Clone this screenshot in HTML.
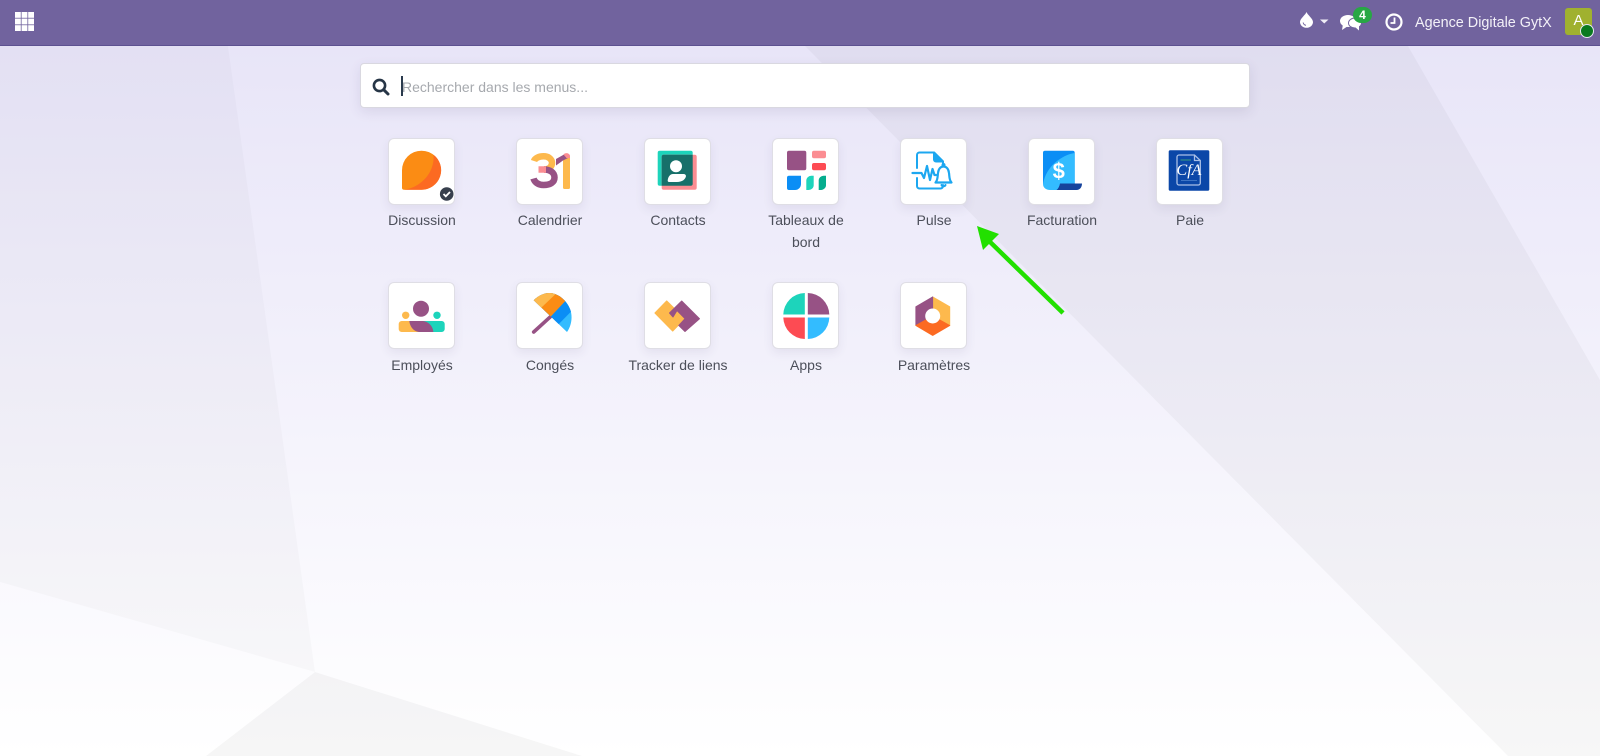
<!DOCTYPE html>
<html lang="fr">
<head>
<meta charset="utf-8">
<title>Odoo</title>
<style>
*{box-sizing:border-box}
html,body{margin:0;padding:0;width:1600px;height:756px;overflow:hidden;font-family:"Liberation Sans",sans-serif}
body{position:relative;background:linear-gradient(180deg,#e8e5f8 45px,#fff 756px)}
.bg{position:absolute;left:0;top:0}
.nav{position:absolute;left:0;top:0;width:1600px;height:46px;background:#71639e;border-bottom:1px solid #5d5190;color:#fff}
.abs{position:absolute}
.search{position:absolute;left:360px;top:63px;width:890px;height:45px;background:#fff;border:1px solid #d9d8e0;border-radius:4px;box-shadow:0 4px 12px rgba(60,50,100,.1)}
.ph{position:absolute;left:41px;top:13px;font-size:14px;line-height:20px;color:#a6a9ae;white-space:nowrap}
.caret{position:absolute;left:40px;top:12px;width:1.5px;height:20px;background:#2a3a4d}
.tile{position:absolute;width:67px;height:67px;background:#fff;border:1px solid #dfdee5;border-radius:6px;box-shadow:0 4px 10px rgba(60,50,100,.08)}
.tile svg{position:absolute;left:0;top:0;width:66px;height:66px;overflow:visible}
.r1 svg{top:-1px}
.lb{position:absolute;width:104px;text-align:center;font-size:14px;line-height:21.6px;color:#4c4f5a}
</style>
</head>
<body>
<svg class="bg" width="1600" height="756" viewBox="0 0 1600 756">
<polygon points="0,46 228,46 315,672 0,582" fill="#000" fill-opacity=".02"/>
<polygon points="805,46 1408,46 1600,380 1600,756 1508,756" fill="#000" fill-opacity=".032"/>
<polygon points="315,672 206,756 582,756" fill="#000" fill-opacity=".035"/>
</svg>

<div class="nav">
<svg class="abs" style="left:15px;top:12px" width="19" height="19" viewBox="0 0 19 19" fill="#fff">
<rect width="5.800" height="5.800"/><rect x="6.600" width="5.800" height="5.800"/><rect x="13.200" width="5.800" height="5.800"/>
<rect y="6.600" width="5.800" height="5.800"/><rect x="6.600" y="6.600" width="5.800" height="5.800"/><rect x="13.200" y="6.600" width="5.800" height="5.800"/>
<rect y="13.200" width="5.800" height="5.800"/><rect x="6.600" y="13.200" width="5.800" height="5.800"/><rect x="13.200" y="13.200" width="5.800" height="5.800"/>
</svg>
<svg class="abs" style="left:1300px;top:12px" width="30" height="16" viewBox="0 0 30 16">
<path d="M6.500 0C7.500 3 13 6.500 13 10A6.500 5.800 0 0 1 0 10C0 6.500 5.500 3 6.500 0Z" fill="#fff"/>
<path d="M3.200 10.500A3 3 0 0 0 6 13.200" stroke="#71639e" stroke-width="1" fill="none"/>
<path d="M20 7.500H28.500L24.250 11.500Z" fill="#f0eef6"/>
</svg>
<svg class="abs" style="left:1340px;top:12px" width="24" height="20" viewBox="0 0 24 20" fill="#fff">
<ellipse cx="8" cy="9" rx="8" ry="6"/><path d="M3 12L2 18L8 14Z"/>
<ellipse cx="15" cy="11" rx="6.500" ry="5" stroke="#71639e" stroke-width="1"/><path d="M15 15L19 18.500L19 14Z"/>
</svg>
<div class="abs" style="left:1353px;top:7px;width:19px;height:16px;border-radius:8px;background:#28a745;color:#fff;font-size:12px;font-weight:bold;line-height:16px;text-align:center">4</div>
<svg class="abs" style="left:1385px;top:13px" width="18" height="18" viewBox="0 0 18 18">
<circle cx="9" cy="9" r="7.500" fill="none" stroke="#fff" stroke-width="2.200"/>
<path d="M9.500 4.500V10H5.500" fill="none" stroke="#fff" stroke-width="1.800"/>
</svg>
<div class="abs" style="left:1415px;top:13px;font-size:14.400px;line-height:20px;white-space:nowrap;color:#f3f1f8">Agence Digitale GytX</div>
<div class="abs" style="left:1565px;top:8px;width:27px;height:27px;background:#a0b12f;border-radius:3px;color:#fff;font-size:15px;line-height:26px;text-align:center">A</div>
<div class="abs" style="left:1580px;top:24px;width:14px;height:14px;border-radius:50%;background:#0a7a1f;border:1.500px solid #e8e6f2"></div>
</div>

<div class="search">
<svg class="abs" style="left:11px;top:14px" width="18" height="18" viewBox="0 0 18 18">
<circle cx="7.500" cy="7.500" r="5.600" fill="none" stroke="#263546" stroke-width="2.600"/>
<path d="M11.800 11.800L16 16" stroke="#263546" stroke-width="3" stroke-linecap="round"/>
</svg>
<div class="caret"></div>
<div class="ph">Rechercher dans les menus...</div>
</div>

<!-- Discussion -->
<div class="tile r1" style="left:388px;top:138px"><svg viewBox="0 0 66 66">
<path d="M13 32.200A19.500 19.500 0 1 1 32.500 51.700H15A2 2 0 0 1 13 49.700Z" fill="#fb8c14"/>
<path d="M44.500 16.700A19.500 19.500 0 0 1 32.500 51.700H15C30 50 46 36 44.500 16.700Z" fill="#fc6a22"/>
<circle cx="57.700" cy="56" r="7.800" fill="#fff"/><circle cx="57.700" cy="56" r="6.800" fill="#373f4d"/>
<path d="M54.500 56L56.800 58.300L61 54" fill="none" stroke="#fff" stroke-width="1.800"/>
</svg></div>
<div class="lb" style="left:370px;top:210px">Discussion</div>

<!-- Calendrier -->
<div class="tile r1" style="left:516px;top:138px"><svg viewBox="0 0 66 66">
<path d="M17 23C18 20 22 18.300 26.500 18.300C31.500 18.300 35 21 35 25C35 29 31.500 31.500 27 31.500" fill="none" stroke="#fdb94d" stroke-width="6.500"/>
<path d="M27 31.500C33 31.500 37.500 34.500 37.500 39.500C37.500 44.500 33 47 26.500 47C21 47 17.500 44 16.500 40.500" fill="none" stroke="#975285" stroke-width="6.500"/>
<path d="M21.500 31.500H29" stroke="#fb8d92" stroke-width="6.500"/>
<path d="M46 19H53V49.500A1.500 1.500 0 0 1 51.500 51H47.500A1.500 1.500 0 0 1 46 49.500Z" fill="#fdb94d"/>
<path d="M39 21L47 16.500L53 19L46 22.500L39 27.500Z" fill="#975285"/>
<path d="M46.500 16.500C48 14.500 52 14.500 53 17.500V20H49.500Z" fill="#fb8d92"/>
</svg></div>
<div class="lb" style="left:498px;top:210px">Calendrier</div>

<!-- Contacts -->
<div class="tile r1" style="left:644px;top:138px"><svg viewBox="0 0 66 66">
<rect x="12.700" y="12.700" width="35" height="35" rx="2" fill="#1dd4bb"/>
<rect x="16.700" y="16.700" width="35" height="35" rx="2" fill="#fb8d92"/>
<path d="M16.700 18.700A2 2 0 0 1 18.700 16.700H47.700V45.700A2 2 0 0 1 45.700 47.700H16.700Z" fill="#17706a"/>
<circle cx="31" cy="28.300" r="6" fill="#fff"/>
<path d="M28 36H38.500A2.500 2.500 0 0 1 41 38C40.500 41.500 37 44 32 44H24A1.300 1.300 0 0 1 22.700 42.500C23 39 25 36 28 36Z" fill="#fff"/>
</svg></div>
<div class="lb" style="left:626px;top:210px">Contacts</div>

<!-- Tableaux de bord -->
<div class="tile r1" style="left:772px;top:138px"><svg viewBox="0 0 66 66">
<rect x="14" y="12.700" width="19.300" height="19.600" rx="2" fill="#975285"/>
<rect x="39" y="12.700" width="14" height="7.600" rx="2" fill="#fb8d92"/>
<rect x="39" y="25" width="14" height="7.300" rx="2" fill="#fd4b53"/>
<path d="M14 39.700A2 2 0 0 1 16 37.700H28V46A6 6 0 0 1 22 52H16A2 2 0 0 1 14 50Z" fill="#0b8ef5"/>
<path d="M33.300 43A5 5 0 0 1 38.500 37.700H40.700V46.700A5 5 0 0 1 35.500 52H33.300Z" fill="#1dd4bb"/>
<path d="M45.700 43A5 5 0 0 1 51 37.700H53V46.700A5 5 0 0 1 48 52H45.700Z" fill="#05ad8e"/>
</svg></div>
<div class="lb" style="left:754px;top:210px">Tableaux de bord</div>

<!-- Pulse -->
<div class="tile r1" style="left:900px;top:138px"><svg viewBox="0 0 66 66" fill="none" stroke="#1ca7f0" stroke-width="2" stroke-linejoin="round" stroke-linecap="round">
<path d="M16 30V17A2.500 2.500 0 0 1 18.500 14.500H33L42 23.500V27"/>
<path d="M16 40V48A2.500 2.500 0 0 0 18.500 50.500H39.500A2.500 2.500 0 0 0 42 48V47"/>
<path d="M33 14.500L42 23.500H35A2 2 0 0 1 33 21.500Z" fill="#1ca7f0"/>
<path d="M11.500 35H20.500L23 40L26 28L29 42L31.500 31L33.500 37H35" stroke-width="2.200"/>
<path d="M34.500 44.500C37 42 36.500 38 37 35C37.500 31 39.500 28.500 42.500 28.500C45.500 28.500 47.500 31 48 35C48.500 38 48 42 50.500 44.500Z" stroke-width="2.200"/>
<path d="M40.500 47C41 48.500 44 48.500 44.500 47" stroke-width="2"/>
<circle cx="42.500" cy="27" r="1" fill="#1ca7f0"/>
</svg></div>
<div class="lb" style="left:882px;top:210px">Pulse</div>

<!-- Facturation -->
<div class="tile r1" style="left:1028px;top:138px"><svg viewBox="0 0 66 66">
<path d="M14 14.700A2 2 0 0 1 16 12.700H43.700A2 2 0 0 1 45.700 14.700V46H14Z" fill="#0b8ef5"/>
<path d="M45.700 15C33 17 17 28 14 46C14 50 17.500 52 21 52H38L45.700 46Z" fill="#33bcff"/>
<path d="M31 45.500H53C53 49 51 52 47.500 52H27.500C29.500 50.500 30.500 48 31 45.500Z" fill="#16439c"/>
<text x="29.700" y="40.500" text-anchor="middle" font-family="Liberation Sans,sans-serif" font-weight="bold" font-size="22" fill="#fff">$</text>
</svg></div>
<div class="lb" style="left:1010px;top:210px">Facturation</div>

<!-- Paie -->
<div class="tile r1" style="left:1156px;top:138px"><svg viewBox="0 0 66 66">
<rect x="11.700" y="12.300" width="40.600" height="40.500" rx="1.500" fill="#0b47a8"/>
<path d="M22 17H37.500L43.300 22.500V45A2 2 0 0 1 41.300 47H22A2 2 0 0 1 20 45V19A2 2 0 0 1 22 17Z" fill="none" stroke="#a9bfe6" stroke-width="1.300"/>
<path d="M37.500 17V22.500H43.300" fill="none" stroke="#a9bfe6" stroke-width="1.300"/>
<path d="M23.500 22H34" stroke="#2f8a86" stroke-width="1.300"/>
<path d="M24 42.500H40" stroke="#3e74c4" stroke-width="1"/>
<text x="32" y="37" text-anchor="middle" font-family="Liberation Serif,serif" font-style="italic" font-size="16" fill="#fff">CfA</text>
</svg></div>
<div class="lb" style="left:1138px;top:210px">Paie</div>

<!-- Employés -->
<div class="tile" style="left:388px;top:282px"><svg viewBox="0 0 66 66">
<circle cx="32" cy="25.700" r="8" fill="#975285"/>
<circle cx="16.700" cy="32.300" r="3.700" fill="#fdb94d"/>
<circle cx="48" cy="32.300" r="3.700" fill="#1dd4bb"/>
<path d="M12.700 38H30V49H12.700A3 3 0 0 1 9.700 46V41A3 3 0 0 1 12.700 38Z" fill="#fdb94d"/>
<path d="M30 38H52.700A3 3 0 0 1 55.700 41V46A3 3 0 0 1 52.700 49H30Z" fill="#1dd4bb"/>
<path d="M20.300 38H33C39 38 44 43 44.300 49H31C25 49 21 44 20.300 38Z" fill="#975285"/>
</svg></div>
<div class="lb" style="left:370px;top:355px">Employés</div>

<!-- Congés -->
<div class="tile" style="left:516px;top:282px"><svg viewBox="0 0 66 66">
<defs><clipPath id="u"><path d="M16.700 17.300C22 12 28 9.800 33 10C42 10.500 50 18 53 26C56 33 54.500 43 50 49Z"/></clipPath></defs>
<path d="M35 32.300L16.700 49" stroke="#975285" stroke-width="3.600" stroke-linecap="round"/>
<g clip-path="url(#u)">
<rect x="0" y="0" width="66" height="66" fill="#33bcff"/>
<polygon points="30,53 66,16.400 66,0 0,0 0,53" fill="#0b8ef5"/>
<polygon points="24,44 60,5.500 60,0 0,0 0,44" fill="#fb8c14"/>
<polygon points="15,33.500 48.300,1.800 48.300,0 0,0 0,33.500" fill="#fdb94d"/>
</g>
</svg></div>
<div class="lb" style="left:498px;top:355px">Congés</div>

<!-- Tracker de liens -->
<div class="tile" style="left:644px;top:282px"><svg viewBox="0 0 66 66" stroke-linejoin="round">
<polygon points="10,30 21.700,18 39.500,35.700 27.700,48" fill="#fdb94d" stroke="#fdb94d" stroke-width="1.200"/>
<polygon points="24.500,30 36.700,18 54.500,35.700 40,48.500 33.800,42.500 40,35.700 32,27.500 28,34" fill="#975285" stroke="#975285" stroke-width="1"/>
</svg></div>
<div class="lb" style="left:626px;top:355px">Tracker de liens</div>

<!-- Apps -->
<div class="tile" style="left:772px;top:282px"><svg viewBox="0 0 66 66">
<path d="M31.800 10V31.500H10.300A22 22 0 0 1 31.800 10Z" fill="#1dd4bb"/>
<path d="M34.800 10A22 22 0 0 1 56.300 31.500H34.800Z" fill="#975285"/>
<path d="M10.300 34.500H31.800V56A22 22 0 0 1 10.300 34.500Z" fill="#fd4b53"/>
<path d="M34.800 34.500H56.300A22 22 0 0 1 34.800 56Z" fill="#33bcff"/>
</svg></div>
<div class="lb" style="left:754px;top:355px">Apps</div>

<!-- Paramètres -->
<div class="tile" style="left:900px;top:282px"><svg viewBox="0 0 66 66" stroke-linejoin="round">
<path d="M31.700 13.800L48.800 23.700V42.500L31.700 33Z" fill="#fdb94d" stroke="#fdb94d" stroke-width=".8"/>
<path d="M31.700 13.800L14.800 23.700V42.500L31.700 33Z" fill="#975285" stroke="#975285" stroke-width=".8"/>
<path d="M14.800 42.500L31.700 33L48.800 42.500L31.700 52.500Z" fill="#fc6a22" stroke="#fc6a22" stroke-width=".8"/>
<circle cx="31.700" cy="33" r="7.500" fill="#fff"/>
</svg></div>
<div class="lb" style="left:882px;top:355px">Paramètres</div>

<!-- Arrow -->
<svg class="abs" style="left:0;top:0" width="1600" height="756" viewBox="0 0 1600 756">
<path d="M1063 313L986 238" stroke="#22e000" stroke-width="4.500" fill="none"/>
<polygon points="977,226 999,234 983,250" fill="#22e000"/>
</svg>
</body>
</html>
